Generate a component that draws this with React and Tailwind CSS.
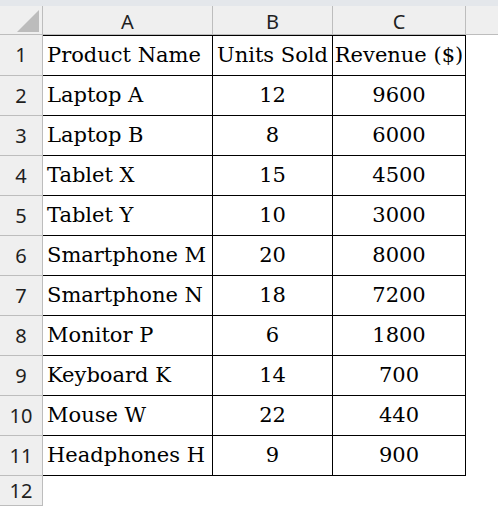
import React from "react";

const rows = [
  ["Product Name", "Units Sold", "Revenue ($)"],
  ["Laptop A", "12", "9600"],
  ["Laptop B", "8", "6000"],
  ["Tablet X", "15", "4500"],
  ["Tablet Y", "10", "3000"],
  ["Smartphone M", "20", "8000"],
  ["Smartphone N", "18", "7200"],
  ["Monitor P", "6", "1800"],
  ["Keyboard K", "14", "700"],
  ["Mouse W", "22", "440"],
  ["Headphones H", "9", "900"],
];

const sans = { fontFamily: '"Noto Sans", "Open Sans", sans-serif' };
const serif = { fontFamily: '"DejaVu Serif", "Liberation Serif", serif' };

export default function App() {
  return (
    <div className="w-[498px] h-[506px] bg-white overflow-hidden text-black">
      <div className="h-[6px] bg-[#e4e7eb]" />
      {/* column header */}
      <div className="flex h-[29px] bg-[#efefef] border-b border-[#bdbdbd]">
        <div className="w-[43px] shrink-0 border-r border-[#bdbdbd] relative">
          <svg className="absolute left-0 top-0" width="42" height="28">
            <polygon points="17,26 39,26 39,4" fill="#bcbcbc" />
          </svg>
        </div>
        {[
          ["A", "w-[170px]"],
          ["B", "w-[120px]"],
          ["C", "w-[133px]"],
        ].map(([l, w]) => (
          <div
            key={l}
            className={`${w} shrink-0 border-r border-[#bdbdbd] flex items-center justify-center text-[20px] leading-none text-[#1f1f1f] pt-[3px]`}
            style={sans}
          >
            {l}
          </div>
        ))}
        <div className="flex-1" />
      </div>
      {rows.map((r, i) => (
        <div
          key={i}
          className={`flex ${i === 0 ? "h-[41px]" : "h-[40px]"}`}
        >
          <div
            className="w-[43px] shrink-0 bg-[#efefef] border-r border-b border-[#bdbdbd] flex items-center justify-center text-[20px] text-[#1f1f1f]"
            style={sans}
          >
            {i + 1}
          </div>
          <div
            className={`w-[170px] shrink-0 border-r border-b border-black ${i === 0 ? "border-t" : ""} flex items-center pl-[4px] text-[21px] whitespace-nowrap overflow-hidden`}
            style={serif}
          >
            {r[0]}
          </div>
          <div
            className={`w-[120px] shrink-0 border-r border-b border-black ${i === 0 ? "border-t" : ""} flex items-center justify-center text-[21px] whitespace-nowrap overflow-hidden`}
            style={serif}
          >
            {r[1]}
          </div>
          <div
            className={`w-[133px] shrink-0 border-r border-b border-black ${i === 0 ? "border-t" : ""} flex items-center justify-center text-[21px] whitespace-nowrap overflow-hidden`}
            style={serif}
          >
            {r[2]}
          </div>
        </div>
      ))}
      <div className="flex h-[30px]">
        <div
          className="w-[43px] shrink-0 bg-[#efefef] border-r border-b border-[#bdbdbd] flex items-center justify-center text-[20px] text-[#1f1f1f]"
          style={sans}
        >
          12
        </div>
      </div>
    </div>
  );
}
